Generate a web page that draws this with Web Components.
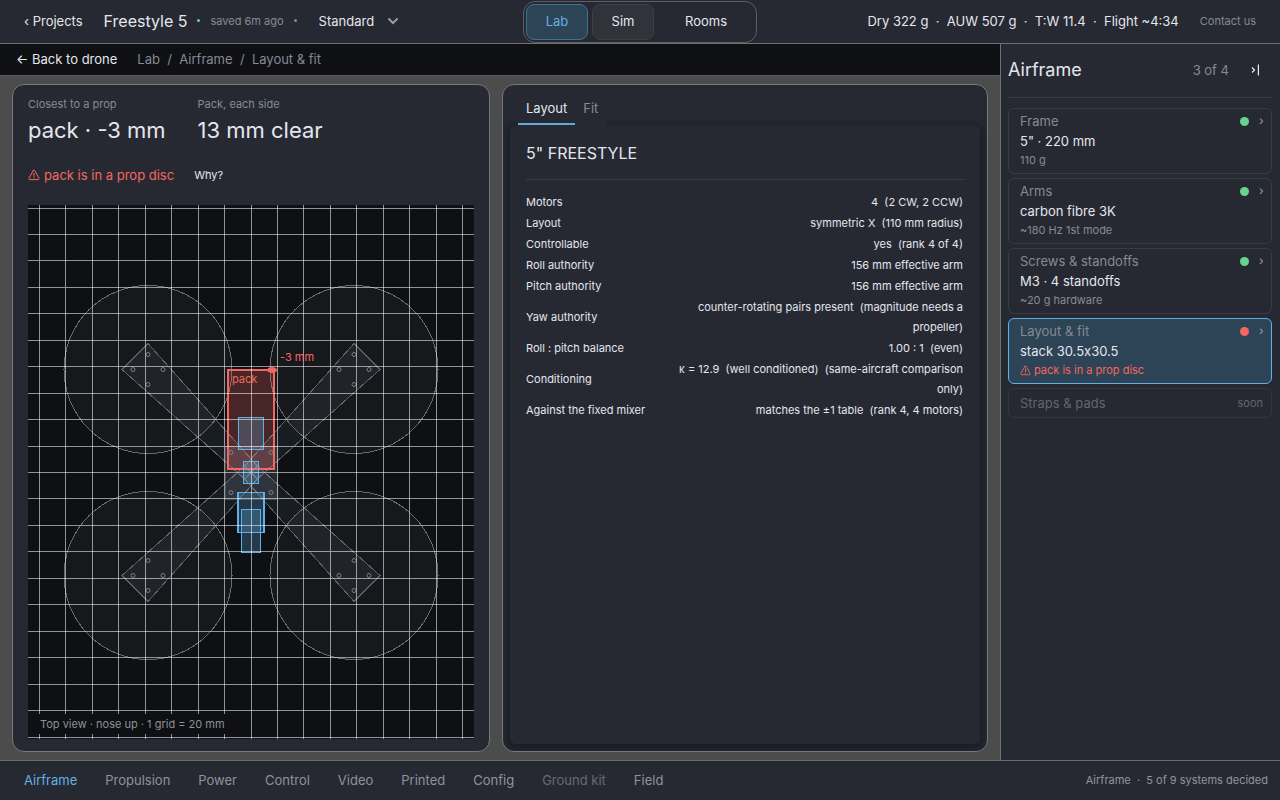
<!DOCTYPE html>
<html lang="en">
<head>
<meta charset="utf-8">
<title>Freestyle 5 – Airframe</title>
<style>
  :root {
    --bar: #272932; --deep: #0f1014; --gap: #4c4c4c; --line: #6e7076; --hair: #383b44;
    --text: #e4e6ee; --muted: #868994; --blue: #62b0e4; --red: #f4675f; --green: #68d391;
  }
  html, body { height: 100%; margin: 0; }
  body { background: var(--gap); color: var(--text); font: 13px/20px Inter, "Noto Sans", sans-serif; }
</style>
</head>
<body>
<lab-app></lab-app>
<script>
const base = `<style>
*{box-sizing:border-box}
button,select{font:inherit;color:inherit;background:none;border:0;padding:0;margin:0;cursor:pointer;letter-spacing:inherit}
a{color:inherit;text-decoration:none}
</style>`;
function define(name, html, setup) {
  const tpl = document.createElement('template');
  tpl.innerHTML = base + html;
  customElements.define(name, class extends HTMLElement {
    connectedCallback() {
      if (this.shadowRoot) return;
      this.attachShadow({ mode: 'open' }).append(tpl.content.cloneNode(true));
      if (setup) setup(this, this.shadowRoot);
    }
  });
}

define('warn-icon', `<style>:host{display:inline-block;width:1em;height:1em}svg{display:block;width:100%;height:100%}</style>
<svg viewBox="0 0 12 12" fill="none" stroke="currentColor" stroke-width="1" stroke-linejoin="round" stroke-linecap="round">
<path d="M5.3 1.5 .9 9.4a.8.8 0 0 0 .7 1.2h8.8a.8.8 0 0 0 .7-1.2L6.7 1.5a.8.8 0 0 0-1.4 0Z"/><path d="M6 4.4v3M6 8.7v.2"/></svg>`);

define('top-bar', `<style>
:host{display:grid;grid-template-columns:1fr auto 1fr;align-items:center;height:44px;padding:0 24px;background:var(--bar);border-bottom:1px solid var(--line)}
.left{display:flex;align-items:center;padding-bottom:2px}
.title{font-size:16px;margin:0 10px 0 21px;font-weight:400}
.dot{width:3px;height:3px;border-radius:50%;background:var(--green)}
.saved{font-size:11px;color:var(--muted);margin:0 10px}
.mini{width:3px;height:3px;border-radius:50%;background:var(--muted);margin-right:22px}
.pick{display:flex;align-items:center;gap:4px}
select{appearance:none;width:64px}
option{color:#111}
nav{display:flex;gap:4px;padding:2px;border:1px solid #5c5e65;border-radius:12px;height:42px}
nav button{width:62px;border-radius:8px;border:1px solid transparent;padding-bottom:1px}
nav .on{background:#2d4356;border-color:#3f7192;color:var(--blue)}
nav .alt{background:#31333b;border-color:#3c3e47}
nav .wide{width:96px}
.right{display:flex;justify-content:flex-end;align-items:center;padding-bottom:2px}
.stats{white-space:pre}
.contact{font-size:11px;color:var(--muted);margin-left:21px}
</style>
<div class="left"><a href="#">‹ Projects</a><h1 class="title">Freestyle 5</h1><i class="dot"></i><span class="saved">saved 6m ago</span><i class="mini"></i>
<label class="pick"><select aria-label="Mode"><option>Standard</option></select><svg width="12" height="8" viewBox="0 0 12 8" fill="none" stroke="#9a9ca5" stroke-width="2"><path d="m1.500 1.500 4.500 4.500 4.500-4.500"/></svg></label></div>
<nav><button class="on">Lab</button><button class="alt">Sim</button><button class="wide">Rooms</button></nav>
<div class="right"><span class="stats">Dry 322 g  ·  AUW 507 g  ·  T:W 11.4  ·  Flight ~4:34</span><a class="contact" href="#">Contact us</a></div>`);

define('crumb-bar', `<style>
:host{display:flex;align-items:center;gap:20px;height:32px;padding:0 16px 2px;background:var(--deep);border-bottom:1px solid #5a5b5e}
nav{color:var(--muted);white-space:pre}
</style>
<a href="#">← Back to drone</a><nav aria-label="Breadcrumb"><a href="#">Lab</a>  /  <a href="#">Airframe</a>  /  <a href="#">Layout &amp; fit</a></nav>`);

define('metric-tile', `<style>
:host{display:block}
.k{font-size:11px;line-height:20px;color:var(--muted)}
.v{font-size:22px;line-height:32px}
</style><div class="k"><slot name="label"></slot></div><div class="v"><slot></slot></div>`);

define('top-view', `<style>
:host{display:block;position:relative;background:var(--deep);min-height:0;overflow:hidden}
svg{display:block;width:100%;height:100%;position:absolute;inset:0}
text{font:11px Inter,sans-serif;fill:var(--red)}
.cap{position:absolute;left:0;bottom:5px;padding:0 12px;font-size:11px;line-height:20px;color:#8d9099;background:var(--deep)}
</style>
<svg viewBox="28 205 446 534" preserveAspectRatio="xMidYMid slice" role="img" aria-label="Top view of the airframe">
<g id="props" fill="#fff" fill-opacity=".035" stroke="#686b6f" shape-rendering="crispEdges"></g>
<g id="arms" fill="#8fb4d8" fill-opacity=".08" stroke="#5c6168" shape-rendering="crispEdges"></g>
<rect x="225" y="446" width="52" height="53" fill="#a9b0c0" fill-opacity=".16" stroke="#5e6269" stroke-opacity=".6" shape-rendering="crispEdges"/>
<g shape-rendering="crispEdges">
<rect x="228" y="370" width="46" height="99" fill="#f4675f" fill-opacity=".25" stroke="#f4675f" stroke-width="2"/>
<g fill="#62b0e4" fill-opacity=".26" stroke="#5fb0ea">
<rect x="238.500" y="417.500" width="25" height="32"/><rect x="243.500" y="461.500" width="15" height="22" stroke-width="1.500"/>
<rect x="238" y="492.500" width="26" height="40" stroke-width="1.500"/><rect x="241.500" y="509.500" width="19" height="43"/></g>
</g>
<g id="holes" fill="none" stroke="#7b8088" stroke-width="1"></g>
<g id="grid" stroke="#fff" stroke-opacity=".55" shape-rendering="crispEdges"></g>
<ellipse cx="272" cy="370" rx="5" ry="3" fill="#f4675f"/>
<text x="232" y="383">pack</text><text x="280" y="361">-3 mm</text>
</svg>
<div class="cap">Top view · nose up · 1 grid = 20 mm</div>`, (host, root) => {
  const cx = 251, cy = 472.5, s = 1.3225, off = 103, tip = 26, hub = 6.4;
  const $ = id => root.getElementById(id);
  let grid = '', props = '', arms = '', holes = '';
  for (let i = -30; i <= 30; i++) {
    const x = Math.floor(cx + i * 20 * s) + .5, y = Math.floor(cy + i * 20 * s) + .5;
    grid += `<path d="M${x} -300V1300M-500 ${y}H1100"/>`;
  }
  const hole = (x, y) => holes += `<circle cx="${x}" cy="${y}" r="2"/>`;
  for (const u of [-1, 1]) for (const v of [-1, 1]) {
    const x = cx + u * off, y = cy + v * off;
    props += `<circle cx="${x}" cy="${y}" r="84"/>`;
    arms += `<path d="M${x + u * tip} ${y}L${x} ${y + v * tip}L${cx - u * hub} ${cy + v * hub}L${cx + u * hub} ${cy - v * hub}Z"/>`;
    for (const [a, b] of [[15, 0], [-15, 0], [0, 15], [0, -15]]) hole(x + a, y + b);
    hole(cx + u * 20, cy + v * 20);
  }
  $('grid').innerHTML = grid; $('props').innerHTML = props; $('arms').innerHTML = arms; $('holes').innerHTML = holes;
});

define('view-card', `<style>
:host{display:flex;flex-direction:column;min-width:0;background:var(--bar);border:1px solid #77797d;border-radius:12px;padding:9px 15px 12px}
.metrics{display:flex;gap:32px}
.alert{display:flex;align-items:center;gap:20px;height:20px;margin:19px 0 20px}
.warn{display:flex;align-items:center;gap:4px;color:var(--red)}
warn-icon{font-size:12px}
button{font-size:11px}
top-view{flex:1}
</style>
<div class="metrics"><metric-tile><span slot="label">Closest to a prop</span>pack · -3 mm</metric-tile><metric-tile><span slot="label">Pack, each side</span>13 mm clear</metric-tile></div>
<div class="alert"><span class="warn"><warn-icon></warn-icon>pack is in a prop disc</span><button>Why?</button></div>
<top-view></top-view>`);

define('detail-card', `<style>
:host{display:flex;flex-direction:column;min-width:0;background:var(--bar);border:1px solid #77797d;border-radius:12px;padding:8px 7px 7px;overflow:hidden}
.tabs{display:flex;padding-left:8px;height:32px;position:relative;z-index:1}
.tabs button{padding:0 8px;color:var(--muted);background:var(--bar);border-bottom:2px solid transparent}
.tabs .on{color:var(--text);border-color:#62a9d8}
.well{flex:1;background:var(--bar);border-radius:6px;padding:16px 15px 16px 16px;box-shadow:0 3px 6px 4px #1d1f25}
h2{font-size:16px;line-height:24px;font-weight:400;margin:0;padding-bottom:14px;border-bottom:1px solid var(--hair)}
table{width:100%;border-collapse:collapse;margin-top:12px;font-size:11px;line-height:20px}
td,th{padding:0 0 1px;font-weight:400;text-align:left;vertical-align:middle}
th{width:136px;white-space:nowrap}
td{text-align:right;white-space:pre-wrap;padding-right:2px}
</style>
<div class="tabs" role="tablist"><button class="on" role="tab">Layout</button><button role="tab">Fit</button></div>
<div class="well"><h2>5" FREESTYLE</h2><table><tbody>
<tr><th scope="row">Motors</th><td>4  (2 CW, 2 CCW)</td></tr>
<tr><th scope="row">Layout</th><td>symmetric X  (110 mm radius)</td></tr>
<tr><th scope="row">Controllable</th><td>yes  (rank 4 of 4)</td></tr>
<tr><th scope="row">Roll authority</th><td>156 mm effective arm</td></tr>
<tr><th scope="row">Pitch authority</th><td>156 mm effective arm</td></tr>
<tr><th scope="row">Yaw authority</th><td>counter-rotating pairs present  (magnitude needs a propeller)</td></tr>
<tr><th scope="row">Roll : pitch balance</th><td>1.00 : 1  (even)</td></tr>
<tr><th scope="row">Conditioning</th><td>κ = 12.9  (well conditioned)  (same-aircraft comparison only)</td></tr>
<tr><th scope="row">Against the fixed mixer</th><td>matches the ±1 table  (rank 4, 4 motors)</td></tr>
</tbody></table></div>`);

define('part-card', `<style>
:host{display:block}
button{display:block;width:100%;text-align:left;border:1px solid var(--hair);border-radius:6px;padding:1px 7px 3px 11px}
.row{display:flex;align-items:center;height:22px;color:var(--muted)}
.name{flex:1}
.dot{width:9px;height:9px;border-radius:50%;background:var(--green);margin-right:10px}
.go{font-size:12px;color:#9b9ea8;width:5px}
.main{line-height:20px;margin-top:-1px;font-feature-settings:"calt" 0}
.sub{font-size:11px;line-height:18px;color:var(--muted);display:flex;align-items:center;gap:3px;padding-bottom:1px}
:host([selected]) button{background:#2d4356;border-color:var(--blue)}
:host([selected]) .dot{background:var(--red)}
:host([selected]) .sub{color:var(--red)}
</style>
<button><div class="row"><span class="name"><slot name="name"></slot></span><i class="dot"></i><span class="go">›</span></div><div class="main"><slot></slot></div><div class="sub"><slot name="sub"></slot></div></button>`);

define('part-panel', `<style>
:host{display:block;background:var(--bar);border-left:1px solid var(--line);padding:0 8px 0 7px}
header{display:flex;align-items:center;height:54px;border-bottom:1px solid var(--hair);margin-bottom:10px;padding-bottom:2px}
h2{flex:1;font-size:18px;font-weight:400;margin:0}
.n{color:var(--muted);margin-right:22px}
header button{margin-right:13px;display:flex}
.list{display:grid;gap:4px}
.soon{display:flex;justify-content:space-between;width:100%;padding:4px 8px 4px 11px;border:1px solid #343740;border-radius:6px;color:#62656f}
.soon small{font-size:11px}
</style>
<header><h2>Airframe</h2><span class="n">3 of 4</span><button aria-label="Collapse panel"><svg width="8" height="12" viewBox="0 0 8 12" fill="none" stroke="#e8eaf2" stroke-width="1.200"><path d="m1 3.500 2.500 2.500L1 8.500M7.400 .500v11"/></svg></button></header>
<div class="list">
<part-card><span slot="name">Frame</span>5" · 220 mm<span slot="sub">110 g</span></part-card>
<part-card><span slot="name">Arms</span>carbon fibre 3K<span slot="sub">~180 Hz 1st mode</span></part-card>
<part-card><span slot="name">Screws &amp; standoffs</span>M3 · 4 standoffs<span slot="sub">~20 g hardware</span></part-card>
<part-card selected><span slot="name">Layout &amp; fit</span>stack 30.5x30.5<warn-icon slot="sub"></warn-icon><span slot="sub">pack is in a prop disc</span></part-card>
<button class="soon" disabled><span>Straps &amp; pads</span><small>soon</small></button>
</div>`);

define('bottom-bar', `<style>
:host{display:flex;align-items:center;justify-content:space-between;height:40px;padding:0 12px 2px 24px;background:var(--bar);border-top:1px solid #67696f}
nav{display:flex;gap:28px;color:#8f929c}
.on{color:var(--blue)}.off{color:#676a74}
small{font-size:11px;color:#9194a0;white-space:pre}
</style>
<nav><a class="on" href="#">Airframe</a><a href="#">Propulsion</a><a href="#">Power</a><a href="#">Control</a><a href="#">Video</a><a href="#">Printed</a><a href="#">Config</a><a class="off" href="#">Ground kit</a><a href="#">Field</a></nav>
<small>Airframe  ·  5 of 9 systems decided</small>`);

define('lab-app', `<style>
:host{display:grid;grid-template-rows:auto minmax(0,1fr) auto;min-height:100vh}
.mid{display:grid;grid-template-columns:minmax(0,1fr) 280px}
.work{display:flex;flex-direction:column;min-width:0}
.cards{flex:1;display:grid;grid-template-columns:minmax(0,478fr) minmax(0,486fr);gap:12px;padding:8px 12px}
</style>
<top-bar></top-bar>
<div class="mid"><div class="work"><crumb-bar></crumb-bar><main class="cards"><view-card></view-card><detail-card></detail-card></main></div><part-panel></part-panel></div>
<bottom-bar></bottom-bar>`);
</script>
</body>
</html>
